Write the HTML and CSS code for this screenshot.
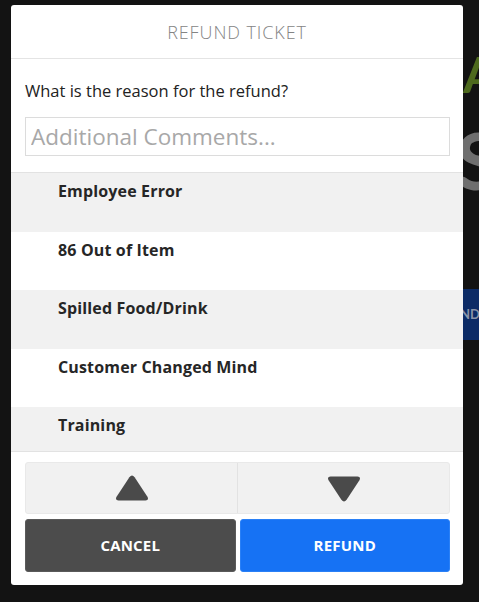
FILE: index.html
```html
<!DOCTYPE html>
<html>
<head>
<meta charset="utf-8">
<link rel="stylesheet" href="styles.css">
</head>
<body>
<div class="backdrop">
  <span class="bg-a">A</span>
  <span class="bg-s">S</span>
  <span class="bg-btn">ND</span>
</div>
<div class="modal">
  <div class="modal-header">REFUND TICKET</div>
  <div class="modal-body">
    <div class="question">What is the reason for the refund?</div>
    <input class="comments" type="text" placeholder="Additional Comments...">
  </div>
  <div class="reasons">
    <div class="reason alt">Employee Error</div>
    <div class="reason">86 Out of Item</div>
    <div class="reason alt">Spilled Food/Drink</div>
    <div class="reason">Customer Changed Mind</div>
    <div class="reason alt">Training</div>
  </div>
  <div class="modal-footer">
    <div class="scroller">
      <div class="scroll-btn">
        <svg width="34" height="27" viewBox="0 0 34 27"><path d="M14.4 2.2 Q17 -1 19.6 2.2 L32.6 22 Q34 25.5 30.5 25.5 L3.5 25.5 Q0 25.5 1.4 22 Z" fill="#4a4a4a"/></svg>
      </div>
      <div class="scroll-btn">
        <svg width="34" height="27" viewBox="0 0 34 27"><path d="M14.4 24.8 Q17 28 19.6 24.8 L32.6 5 Q34 1.5 30.5 1.5 L3.5 1.5 Q0 1.5 1.4 5 Z" fill="#4a4a4a"/></svg>
      </div>
    </div>
    <div class="actions">
      <button class="btn cancel">CANCEL</button>
      <button class="btn refund">REFUND</button>
    </div>
  </div>
</div>
</body>
</html>
```
FILE: styles.css
```css
html, body {
  margin: 0;
  padding: 0;
}
body {
  width: 479px;
  height: 602px;
  background: #131313;
  overflow: hidden;
  position: relative;
  font-family: "Open Sans", "Noto Sans", sans-serif;
}
.backdrop {
  position: absolute;
  inset: 0;
}
.bg-a {
  position: absolute;
  left: 463px;
  top: 44px;
  font: 700 50px/60px "Lato", sans-serif;
  color: #4e6a1e;
}
.bg-s {
  position: absolute;
  left: 456px;
  top: 118px;
  font: 700 78px/84px "Lato", sans-serif;
  color: #6f6f6f;
}
.bg-btn {
  position: absolute;
  left: 440px;
  top: 289px;
  width: 60px;
  height: 51px;
  background: #0c2b66;
  color: #8a93a8;
  font: 700 13px/51px "Lato", sans-serif;
  text-indent: 20px;
}
.modal {
  position: relative;
  margin: 5px 0 0 11px;
  width: 452px;
  height: 580px;
  background: #fff;
  border-radius: 3px;
  overflow: hidden;
  display: flex;
  flex-direction: column;
}
.modal-header {
  height: 53px;
  border-bottom: 1px solid #e4e4e4;
  display: flex;
  align-items: center;
  justify-content: center;
  font-size: 18px;
  font-weight: 300;
  letter-spacing: 0.9px;
  color: #848484;
}
.modal-body {
  padding: 21px 13px 16px 14px;
}
.question {
  font-size: 16.5px;
  color: #222;
  line-height: 22px;
}
.comments {
  display: block;
  box-sizing: border-box;
  width: 425px;
  height: 39px;
  margin-top: 15px;
  border: 1px solid #dcdcdc;
  padding: 0 5px;
  font-family: inherit;
  font-size: 22.5px;
  outline: none;
}
.comments::placeholder {
  color: #a8a8a8;
}
.reasons {
  height: 278px;
  border-top: 1px solid #e2e2e2;
  border-bottom: 1px solid #e2e2e2;
  overflow: hidden;
}
.reason {
  height: 58.5px;
  box-sizing: border-box;
  padding: 7px 0 0 47px;
  font-size: 16px;
  line-height: 22px;
  font-weight: 700;
  letter-spacing: 0.15px;
  color: #262626;
  background: #fff;
}
.reason.alt {
  background: #f1f1f1;
}
.modal-footer {
  padding: 10px 13px 0 14px;
}
.scroller {
  display: flex;
  height: 52px;
  box-sizing: border-box;
  border: 1px solid #e9e9e9;
  border-radius: 3px;
  background: #f1f1f1;
}
.scroll-btn {
  flex: 1;
  display: flex;
  align-items: center;
  justify-content: center;
}
.scroll-btn + .scroll-btn {
  border-left: 1px solid #e2e2e2;
}
.actions {
  display: flex;
  gap: 4px;
  margin-top: 5px;
}
.btn {
  flex: 1 1 0;
  box-sizing: border-box;
  height: 53px;
  padding: 0 0 2px;
  border: 1px solid transparent;
  border-radius: 3px;
  color: #fff;
  font-family: inherit;
  font-size: 15px;
  font-weight: 700;
  letter-spacing: 0.2px;
}
.cancel {
  background: #4c4c4c;
  border-color: #5a5a5a;
}
.refund {
  background: #1672f4;
  border-color: #2a80f6;
}
```
